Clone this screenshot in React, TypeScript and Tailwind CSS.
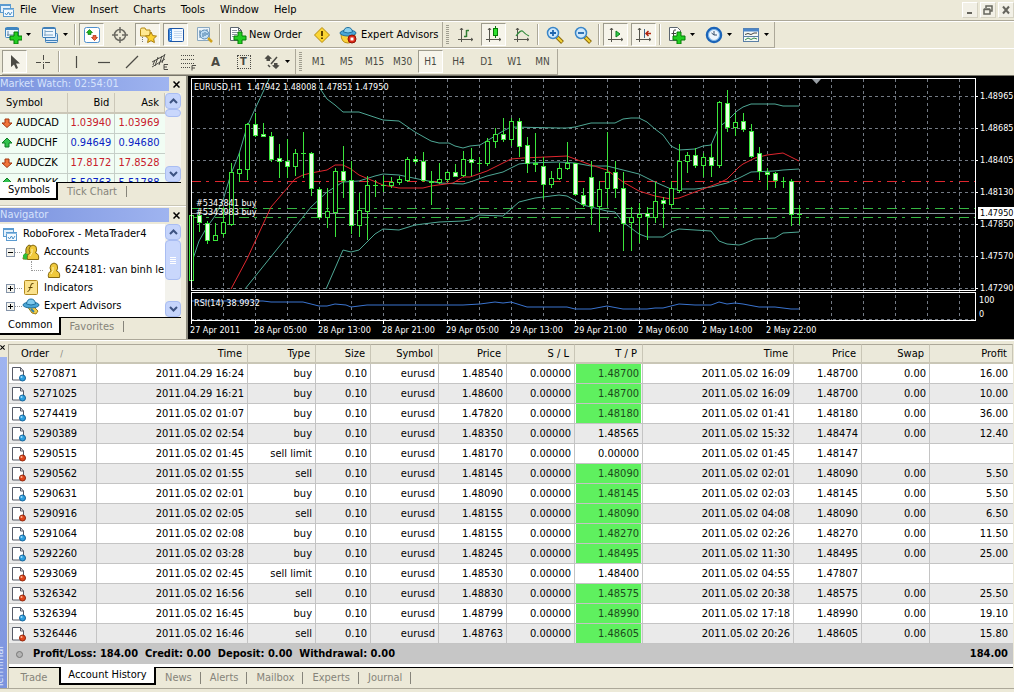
import { ReactNode } from 'react';
import { clsx } from 'clsx';

type Order = {
  id: string;
  open: string;
  type: 'buy' | 'sell' | 'sell limit';
  price: string;
  tp: string;
  hit: boolean;
  close: string;
  closePrice: string;
  swap: string;
  profit: string;
};

const orders: Order[] = [
  { id: '5270871', open: '2011.04.29 16:24', type: 'buy', price: '1.48540', tp: '1.48700', hit: true, close: '2011.05.02 16:09', closePrice: '1.48700', swap: '0.00', profit: '16.00' },
  { id: '5271025', open: '2011.04.29 16:21', type: 'buy', price: '1.48600', tp: '1.48700', hit: true, close: '2011.05.02 16:09', closePrice: '1.48700', swap: '0.00', profit: '10.00' },
  { id: '5274419', open: '2011.05.02 01:07', type: 'buy', price: '1.47820', tp: '1.48180', hit: true, close: '2011.05.02 01:41', closePrice: '1.48180', swap: '0.00', profit: '36.00' },
  { id: '5290389', open: '2011.05.02 02:54', type: 'buy', price: '1.48350', tp: '1.48565', hit: false, close: '2011.05.02 15:32', closePrice: '1.48474', swap: '0.00', profit: '12.40' },
  { id: '5290515', open: '2011.05.02 01:45', type: 'sell limit', price: '1.48170', tp: '0.00000', hit: false, close: '2011.05.02 01:45', closePrice: '1.48147', swap: '', profit: '' },
  { id: '5290562', open: '2011.05.02 01:55', type: 'sell', price: '1.48145', tp: '1.48090', hit: true, close: '2011.05.02 02:01', closePrice: '1.48090', swap: '0.00', profit: '5.50' },
  { id: '5290631', open: '2011.05.02 02:01', type: 'buy', price: '1.48090', tp: '1.48145', hit: true, close: '2011.05.02 02:03', closePrice: '1.48145', swap: '0.00', profit: '5.50' },
  { id: '5290916', open: '2011.05.02 02:05', type: 'sell', price: '1.48155', tp: '1.48090', hit: true, close: '2011.05.02 04:08', closePrice: '1.48090', swap: '0.00', profit: '6.50' },
  { id: '5291064', open: '2011.05.02 02:08', type: 'buy', price: '1.48155', tp: '1.48270', hit: true, close: '2011.05.02 02:26', closePrice: '1.48270', swap: '0.00', profit: '11.50' },
  { id: '5292260', open: '2011.05.02 03:28', type: 'buy', price: '1.48245', tp: '1.48495', hit: true, close: '2011.05.02 11:30', closePrice: '1.48495', swap: '0.00', profit: '25.00' },
  { id: '5293069', open: '2011.05.02 02:45', type: 'sell limit', price: '1.48530', tp: '1.48400', hit: false, close: '2011.05.02 04:55', closePrice: '1.47807', swap: '', profit: '' },
  { id: '5326342', open: '2011.05.02 16:56', type: 'sell', price: '1.48830', tp: '1.48575', hit: true, close: '2011.05.02 20:38', closePrice: '1.48575', swap: '0.00', profit: '25.50' },
  { id: '5326394', open: '2011.05.02 16:45', type: 'buy', price: '1.48799', tp: '1.48990', hit: true, close: '2011.05.02 17:18', closePrice: '1.48990', swap: '0.00', profit: '19.10' },
  { id: '5326446', open: '2011.05.02 16:46', type: 'sell', price: '1.48763', tp: '1.48605', hit: true, close: '2011.05.02 20:26', closePrice: '1.48605', swap: '0.00', profit: '15.80' },
];

const quotes = [
  { symbol: 'AUDCAD', bid: '1.03940', ask: '1.03969', up: false },
  { symbol: 'AUDCHF', bid: '0.94649', ask: '0.94680', up: true },
  { symbol: 'AUDCZK', bid: '17.8172', ask: '17.8528', up: false },
  { symbol: 'AUDDKK', bid: '5.50763', ask: '5.51788', up: true },
];

// high, body top, body bottom, low, bearish (filled)
const candles: [number, number, number, number, 0 | 1][] = [
  [137, 139, 204, 209, 0], [136, 139, 146, 155, 1], [145, 147, 164, 167, 1], [147, 159, 164, 164, 0],
  [131, 146, 157, 160, 0], [87, 96, 148, 149, 0], [77, 93, 97, 105, 0], [47, 48, 93, 103, 0],
  [37, 48, 59, 60, 1], [47, 58, 60, 60, 1], [56, 60, 83, 85, 1], [68, 82, 85, 101, 1],
  [63, 85, 90, 101, 1], [73, 77, 90, 99, 0], [56, 77, 77, 101, 0], [76, 77, 112, 119, 1],
  [111, 113, 141, 142, 1], [112, 135, 141, 151, 0], [92, 95, 136, 160, 0], [70, 95, 104, 121, 1],
  [85, 104, 149, 157, 1], [117, 134, 149, 160, 0], [100, 109, 135, 163, 0], [104, 109, 109, 120, 0],
  [100, 109, 109, 115, 0], [101, 106, 109, 111, 0], [100, 103, 106, 108, 0], [81, 83, 104, 105, 0],
  [80, 83, 85, 87, 1], [76, 85, 104, 105, 1], [95, 105, 106, 128, 1], [87, 103, 106, 107, 0],
  [95, 96, 103, 105, 0], [88, 96, 100, 100, 1], [75, 83, 99, 100, 0], [72, 83, 86, 99, 1],
  [81, 87, 87, 95, 1], [62, 65, 87, 89, 0], [52, 58, 65, 71, 0], [42, 58, 63, 65, 1],
  [42, 45, 63, 69, 0], [42, 45, 70, 80, 1], [61, 69, 87, 96, 1], [57, 87, 88, 95, 1],
  [81, 90, 108, 122, 1], [95, 102, 108, 111, 0], [87, 92, 102, 103, 0], [66, 87, 92, 93, 0],
  [87, 87, 118, 119, 1], [112, 119, 128, 130, 1], [85, 101, 130, 148, 1], [105, 113, 130, 155, 0],
  [56, 96, 112, 129, 0], [85, 96, 112, 121, 1], [96, 112, 147, 174, 1], [131, 141, 146, 174, 0],
  [127, 138, 141, 166, 0], [131, 137, 140, 163, 1], [106, 125, 141, 146, 0], [121, 124, 127, 151, 1],
  [105, 112, 128, 130, 0], [68, 85, 114, 116, 0], [76, 79, 85, 96, 0], [72, 79, 89, 91, 1],
  [77, 81, 89, 100, 0], [68, 81, 89, 100, 1], [25, 26, 89, 91, 0], [14, 27, 51, 55, 1],
  [37, 46, 51, 59, 0], [37, 45, 53, 55, 1], [48, 55, 80, 81, 1], [71, 77, 95, 103, 1],
  [92, 96, 98, 113, 1], [96, 97, 104, 111, 1], [101, 105, 105, 111, 1], [103, 105, 138, 149, 1],
  [129, 138, 138, 148, 1],
];

const bands = [
  '5,183 11,165 19,151 27,140 35,124 43,98 51,78 59,51 67,33 75,16 81,3',
  '131,11 135,17 139,23 147,29 155,36 171,36 180,39 195,44 211,45 227,56 243,65 251,67 261,67 267,70 275,72 282,70 292,69 307,60 315,55 323,51 372,52 379,52 387,51 403,47 427,47 435,43 443,42 451,42 459,46 467,53 475,59 483,70 491,74 507,73 515,70 523,69 531,51 539,45 549,35 555,31 563,28 587,28 595,30 611,30',
  '57,213 123,131 139,116 155,106 171,105 187,100 195,98 211,99 235,104 251,107 275,108 282,106 299,100 315,96 331,88 339,87 371,86 387,87 403,90 419,90 435,94 451,98 467,106 483,113 507,113 523,111 539,107 551,102 563,96 586,95 595,94 611,93',
  '138,213 155,174 163,176 171,174 187,158 195,153 211,154 227,149 251,146 275,145 282,144 291,139 315,140 331,126 347,122 371,119 379,120 395,129 419,135 427,136 435,146 451,158 459,161 475,161 483,156 491,153 523,155 531,165 539,168 551,169 555,168 567,163 587,162 595,157 611,156',
];

const average =
  '43,213 59,183 83,131 107,103 115,99 123,97 139,94 147,89 155,89 163,93 171,99 195,109 211,112 235,112 243,110 265,107 275,101 282,101 299,95 323,83 335,82 379,80 403,89 419,94 435,106 451,115 467,120 483,123 491,122 515,113 531,107 539,103 551,91 555,88 567,82 579,79 595,77 611,85';

const rsi =
  '3,225 75,225 83,226 115,226 123,228 131,230 139,230 147,228 158,229 163,231 179,229 217,229 275,229 292,228 307,226 315,227 323,226 339,231 355,231 379,231 387,233 403,233 419,230 435,233 459,233 467,232 475,232 491,228 507,229 523,229 531,226 539,228 547,227 555,228 571,231 587,231 603,233 611,233';

const times = [
  '27 Apr 2011', '28 Apr 05:00', '28 Apr 13:00', '28 Apr 21:00', '29 Apr 05:00',
  '29 Apr 13:00', '29 Apr 21:00', '2 May 06:00', '2 May 14:00', '2 May 22:00',
];

const prices = ['1.48965', '1.48685', '1.48405', '1.48130', '1.47850', '1.47570', '1.47290'];

const menus = ['File', 'View', 'Insert', 'Charts', 'Tools', 'Window', 'Help'];
const frames = ['M1', 'M5', 'M15', 'M30', 'H1', 'H4', 'D1', 'W1', 'MN'];

/* ---------- icons ---------- */

function Svg({ children, size = 18 }: { children: ReactNode; size?: number }) {
  return (
    <svg width={size} height={size} viewBox={`0 0 ${size} ${size}`} fill="none" className="shrink-0" aria-hidden="true">
      {children}
    </svg>
  );
}

const plus = 'M9 7h4v4h4v4h-4v4h-4v-4h-4v-4h4z';

function ChartWindowsIcon() {
  return (
    <Svg size={14}>
      <rect x="0.5" y="1.5" width="10" height="8" fill="#e4f1fb" stroke="#5b9bd0" />
      <path d="M0 2.5h11" stroke="#5b9bd0" />
      <rect x="3.5" y="5.5" width="10" height="8" fill="#f4faff" stroke="#5b9bd0" />
      <path d="M3 6.5h11" stroke="#8dbce2" />
      <path d="M5 10l1.500 2 2-3 1.500 3 2-3" stroke="#4a90c8" />
    </Svg>
  );
}

function NewChartIcon() {
  return (
    <Svg size={18}>
      <rect x="1.500" y="1.500" width="13" height="10" rx="1" fill="#eef6fd" stroke="#3f86c0" />
      <path d="M1 3h14" stroke="#3f86c0" strokeWidth="2" />
      <path d="M4 10V5M3 9h7" stroke="#5f87a6" />
      <path d={plus} transform="translate(1 -1)" fill="#22cf22" stroke="#067a06" />
    </Svg>
  );
}

function ProfilesIcon() {
  return (
    <Svg>
      <rect x="4.500" y="7.500" width="12" height="9" rx="1" fill="#d6e8f8" stroke="#3f7fb8" />
      <rect x="1.500" y="1.500" width="13" height="10" rx="1" fill="#eef6fd" stroke="#3f7fb8" />
      <path d="M2 2.500h12M2 11.500h12M5 14.500h11" stroke="#3f7fb8" />
      <path d="M4 4v6M3 9h9M4 5.500h8" stroke="#7ea6c6" />
    </Svg>
  );
}

function MarketIcon() {
  return (
    <Svg>
      <rect x="1.500" y="1.500" width="15" height="15" rx="2" fill="#fff" stroke="#4d8fce" />
      <path d="M6.500 3.500l3 3h-1.500v2H5v-2H3.500z" fill="#1fb51f" stroke="#0b7d0b" strokeWidth="0.700" />
      <path d="M11.500 14.500l-3-3H10v-2h3v2h1.500z" fill="#f0653a" stroke="#a82a0c" strokeWidth="0.700" />
    </Svg>
  );
}

function CrosshairIcon() {
  return (
    <Svg>
      <circle cx="9" cy="9" r="5.500" stroke="#6b6a62" strokeWidth="1.500" />
      <path d="M9 1v6M9 11v6M1 9h6M11 9h6" stroke="#6b6a62" strokeWidth="1.500" />
    </Svg>
  );
}

function NavigatorIcon() {
  return (
    <Svg>
      <path d="M1.500 3.500q0-1.500 1.500-1.500h3l1 2h4v6h-9.500z" fill="#ffe992" stroke="#b48a12" />
      <path d="M3.500 11v6" stroke="#777" strokeDasharray="1 1" />
      <path d="M12 6l1.700 3.600 3.800.5-2.800 2.600.7 3.900-3.400-1.900-3.400 1.900.7-3.900-2.800-2.600 3.800-.5z" fill="#fcd231" stroke="#a97c0c" />
    </Svg>
  );
}

function TerminalIcon() {
  return (
    <Svg>
      <rect x="1.500" y="2.500" width="15" height="13" rx="1" fill="#f4f9ff" stroke="#1d56a5" />
      <rect x="2" y="3" width="3" height="12" fill="#3f8ade" />
      <path d="M3.500 5v9" stroke="#d7e9fb" strokeDasharray="1 1" />
      <path d="M7 5.500h8M7 7.500h8M7 9.500h8M7 11.500h8" stroke="#c7d9ee" />
    </Svg>
  );
}

function TesterIcon() {
  return (
    <Svg>
      <path d="M2.500 1.500h12v13h-12z" fill="#edf5fb" stroke="#8aa8c0" />
      <path d="M5 4v8M4 6h2M12 3v6M8 4v3" stroke="#5d87a8" />
      <circle cx="9.500" cy="8.500" r="4.500" fill="#b9dbf5" fillOpacity="0.800" stroke="#5a8bb4" />
      <path d="M8 11V7M10 10V6M12 9V7" stroke="#3f76a3" />
      <path d="M13 12l4 4" stroke="#d0a21c" strokeWidth="2.500" />
    </Svg>
  );
}

function NewOrderIcon() {
  return (
    <Svg>
      <path d="M1.500 1.500h8l3 3v10h-11z" fill="#fff" stroke="#5c6670" />
      <path d="M9.500 1.500v3h3" stroke="#5c6670" />
      <path d="M3 4.500h5M3 6.500h7M3 8.500h5M3 10.500h4" stroke="#8a94a0" />
      <path d={plus} transform="translate(0 -1)" fill="#22cf22" stroke="#067a06" />
    </Svg>
  );
}

function AlertIcon() {
  return (
    <Svg>
      <path d="M9 1.500L16.500 9 9 16.500 1.500 9z" fill="#fbd534" stroke="#b78b0a" strokeLinejoin="round" />
      <path d="M9 5v5M9 11.500v1.500" stroke="#5e4300" strokeWidth="2" />
    </Svg>
  );
}

function ExpertIcon() {
  return (
    <Svg>
      <path d="M2 8h14q0 9-7 9T2 8z" fill="#f9d23c" stroke="#b88d12" />
      <ellipse cx="9" cy="7" rx="8" ry="3" fill="#4aa6d6" stroke="#1f6f9e" />
      <path d="M4.500 6Q5 1.500 9 1.500T13.500 6Q9 8 4.500 6z" fill="#8ad0ee" stroke="#1f6f9e" />
      <circle cx="13" cy="13" r="4" fill="#dd2a18" stroke="#8f1206" />
      <rect x="11.500" y="11.500" width="3" height="3" fill="#fff" />
    </Svg>
  );
}

const axes = 'M4.500 2v14M1 13.500h15M3 4l1.500-2L6 4M14 12l2 1.500-2 1.500';

function BarsIcon() {
  return (
    <Svg>
      <path d={axes} stroke="#55544c" />
      <path d="M9.500 4v7M7 10.500h2.500M9.500 4.500H12" stroke="#2f7d32" strokeWidth="1.500" />
    </Svg>
  );
}

function CandlesIcon() {
  return (
    <Svg>
      <path d={axes} stroke="#55544c" />
      <path d="M10.500 0v12" stroke="#067a06" />
      <rect x="8.500" y="2.500" width="4" height="7" fill="#2fe02f" stroke="#067a06" />
    </Svg>
  );
}

function LineIcon() {
  return (
    <Svg>
      <path d={axes} stroke="#55544c" />
      <path d="M3 10Q8 3 10 5.500T16 10" stroke="#2f8a3a" strokeWidth="1.200" />
    </Svg>
  );
}

function ZoomIcon({ zoomIn }: { zoomIn?: boolean }) {
  return (
    <Svg>
      <path d="M11 11l5.500 5.500" stroke="#8d6c0c" strokeWidth="4" />
      <path d="M11.500 11.500l4.500 4.500" stroke="#f3d438" strokeWidth="2" />
      <circle cx="7" cy="7" r="5.500" fill="#cfe8fb" stroke="#3a86c8" strokeWidth="1.500" />
      <path d={zoomIn ? 'M4 7h6M7 4v6' : 'M4 7h6'} stroke="#1f66ae" strokeWidth="1.800" />
    </Svg>
  );
}

function AutoScrollIcon() {
  return (
    <Svg>
      <path d={axes} stroke="#55544c" />
      <path d="M9 5l4 3-4 3z" fill="#2fd04a" stroke="#0b7d1c" />
    </Svg>
  );
}

function ShiftIcon() {
  return (
    <Svg>
      <path d={axes} stroke="#55544c" />
      <path d="M9.500 3v9" stroke="#3f678c" />
      <path d="M16 7.500h-5M13.500 5L11 7.500l2.500 2.500" stroke="#b0240f" strokeWidth="1.500" />
    </Svg>
  );
}

function IndicatorsIcon() {
  return (
    <Svg>
      <path d="M1.500 1.500h8l3 3v10h-11z" fill="#fff" stroke="#5c6670" />
      <path d="M8 4Q5.500 3 5.500 6v6M3.500 7.500H8" stroke="#444" />
      <path d={plus} transform="translate(0 -1)" fill="#22cf22" stroke="#067a06" />
    </Svg>
  );
}

function ClockIcon() {
  return (
    <Svg>
      <circle cx="9" cy="9" r="7" fill="#eef6fd" stroke="#1b64b8" strokeWidth="2.500" />
      <circle cx="9" cy="9" r="5.500" stroke="#79b4ea" />
      <path d="M9 5v4h3M6.500 7L9 9" stroke="#38506a" />
    </Svg>
  );
}

function TemplateIcon() {
  return (
    <Svg>
      <rect x="1.500" y="2.500" width="15" height="13" fill="#f5f9f5" stroke="#5a7fa6" />
      <path d="M1 4h16" stroke="#4c86c8" strokeWidth="3" />
      <path d="M2 10.500h14" stroke="#5a7fa6" />
      <path d="M3 8.500l3-1 3 1 3-1.500h3" stroke="#444" />
      <path d="M3 14l3-2 3 1.500 3-1.500 3 1" stroke="#2f8a4a" />
    </Svg>
  );
}

function CursorIcon() {
  return (
    <Svg>
      <path d="M5 2v12l3-2.500 2 4.500 2-1-2-4.500h4z" fill="#4c4b45" />
    </Svg>
  );
}

function LinesCrossIcon() {
  return (
    <Svg>
      <path d="M9.500 2v5M9.500 11v5M2 9.500h5M11 9.500h5M9 9.500h1" stroke="#4c4b45" />
    </Svg>
  );
}

function StrokeIcon({ d }: { d: string }) {
  return (
    <Svg>
      <path d={d} stroke="#4c4b45" strokeWidth="1.200" />
    </Svg>
  );
}

function ChannelIcon() {
  return (
    <Svg>
      <path d="M1 9L14 2M1 14l13-8M4 13L7 4M8 12l3-9M11 10l3-9M2 12l2-5" stroke="#4c4b45" />
      <path d="M17 11.500h-4v5h4M13 14h3" stroke="#4c4b45" />
    </Svg>
  );
}

function FiboIcon() {
  return (
    <Svg>
      <path d="M2 2.500h14M2 6.500h14M2 10.500h14M2 14.500h9" stroke="#4c4b45" strokeDasharray="1 1" />
      <path d="M17 12.500h-4v5M13 15h3" stroke="#4c4b45" />
    </Svg>
  );
}

function ShapesIcon() {
  return (
    <Svg>
      <path d="M5 2l4 3.500-2 .5v2H3.500V6l-2-.5zM13 16l-4-3.500 2-.5v-2h3.500v2l2 .5z" fill="#4c4b45" />
      <path d="M5 12l2 2M8 11l6-7" stroke="#4c4b45" strokeWidth="1.500" />
    </Svg>
  );
}

function DocIcon({ buy }: { buy: boolean }) {
  return (
    <Svg size={16}>
      <path d="M1.500 1.500h8l3 3.500v9h-11z" fill="#fff" stroke="#565a66" />
      <path d="M9.500 1.500v3.500h3" stroke="#565a66" />
      <circle cx="11.500" cy="12" r="3" fill={buy ? '#2b9fdf' : '#e0451c'} stroke={buy ? '#14649a' : '#94260a'} />
      <circle cx="10.500" cy="11" r="1" fill={buy ? '#a3dcfa' : '#fbb595'} />
    </Svg>
  );
}

function ArrowIcon({ up }: { up: boolean }) {
  return (
    <Svg size={12}>
      {up ? (
        <path d="M6 1l5 5H8v4H4V6H1z" fill="#2fc24b" stroke="#0d7a22" />
      ) : (
        <path d="M6 10.500l5-4.500H8V2H4v4H1z" fill="#f0763c" stroke="#a3350e" />
      )}
    </Svg>
  );
}

function PersonIcon({ pair }: { pair?: boolean }) {
  return (
    <Svg>
      {pair && <path d="M1 16q0-5 3-6 -1-6 3-8 4 1 3 6v8z" fill="#d8b82c" stroke="#7d6410" />}
      {pair && <circle cx="4" cy="13.500" r="3" fill="#2fbf3a" />}
      <path d="M5.500 16.500q-1-5 2.500-6.500-2-3 0-6.500 3-3 6 0 1.500 4-.500 6.500 4 1 3 6.500z" fill="#f0c93c" stroke="#86690f" />
      <path d="M10 6q1 4-2 7" stroke="#fff3b0" />
    </Svg>
  );
}

function FunctionIcon() {
  return (
    <Svg>
      <rect x="2.500" y="1.500" width="13" height="14" rx="1" fill="#fbe28c" stroke="#b38a20" />
      <path d="M11.500 4.500Q9 3.500 8.500 7.500T5.500 13M6.500 8.500h4" stroke="#5e4300" />
    </Svg>
  );
}

function HatIcon() {
  return (
    <Svg>
      <path d="M5 9l5-1 6 6-2 3-4-1z" fill="#f3cf48" stroke="#9c7a14" />
      <ellipse cx="9" cy="8" rx="8" ry="3" fill="#4aa6d6" stroke="#1f6f9e" />
      <path d="M4.500 7Q5 2 9 2t4.500 5Q9 9 4.500 7z" fill="#7fcbee" stroke="#1f6f9e" />
      <path d="M9 12l3 3" stroke="#2f80ad" strokeWidth="2" />
    </Svg>
  );
}

/* ---------- small parts ---------- */

function Caret() {
  return (
    <svg width="5" height="3" viewBox="0 0 5 3" aria-hidden="true">
      <path d="M0 0h5L2.500 3z" fill="#000" />
    </svg>
  );
}

function Tool({ label, pressed, drop, children }: { label: string; pressed?: boolean; drop?: boolean; children: ReactNode }) {
  return (
    <button
      type="button"
      aria-label={label}
      aria-pressed={pressed}
      className={clsx(
        'flex h-[23px] shrink-0 items-center justify-center border text-[10px] text-[#4a4942]',
        drop ? 'w-[34px] gap-1' : 'w-[25px]',
        pressed ? 'border-t-[#9d9b8d] border-l-[#9d9b8d] border-r-white border-b-white bg-[#f6f4ea]' : 'border-transparent'
      )}
    >
      {children}
      {drop && <Caret />}
    </button>
  );
}

function Separator() {
  return <div className="h-[21px] w-[2px] shrink-0 border-l border-[#aca899] bg-white" />;
}

function Gripper() {
  return (
    <div className="flex h-5 flex-col justify-between">
      {Array.from({ length: 10 }, (_, i) => (
        <div key={i} className="h-px w-[3px] bg-[#a09e90]" />
      ))}
    </div>
  );
}

function Bar({ children }: { children: ReactNode }) {
  return (
    <div className="flex h-[26px] items-center gap-[3px] border-r border-b border-[#aca899] pr-[2px]">
      {children}
    </div>
  );
}

function CloseMark() {
  return (
    <svg width="7" height="7" viewBox="0 0 7 7" aria-hidden="true">
      <path d="M0.500 0.500l6 6M6.500 0.500l-6 6" stroke="#000" strokeWidth="1.500" />
    </svg>
  );
}

function PanelTitle({ children }: { children: ReactNode }) {
  return (
    <div className="flex h-[14px] items-center justify-between pr-[6px]">
      <h2 className="h-full w-[169px] overflow-hidden bg-gradient-to-r from-[#7b93de] to-[#9fb4f0] text-[11px] leading-[14px] text-[#d6e2fb]">
        {children}
      </h2>
      <button type="button" aria-label="Close">
        <CloseMark />
      </button>
    </div>
  );
}

function ScrollBar({ tall }: { tall?: boolean }) {
  return (
    <div className="flex w-4 shrink-0 flex-col bg-[#f3f2ec]">
      <button type="button" aria-label="Scroll up" className="flex h-4 items-center justify-center rounded-sm border border-[#a9bdf2] bg-[#c5d4fb]">
        <svg width="9" height="6" viewBox="0 0 9 6" fill="none"><path d="M1 5l3.500-3.500L8 5" stroke="#3d5382" strokeWidth="2" /></svg>
      </button>
      <div
        className={clsx(
          'flex flex-col items-center justify-center gap-px rounded-sm border border-[#a9bdf2] bg-[#c9d7fc]',
          tall ? 'h-10' : 'h-2'
        )}
      >
        {tall && [0, 1, 2, 3].map((i) => <div key={i} className="h-px w-[6px] bg-white" />)}
      </div>
      <div className="flex-1" />
      <button type="button" aria-label="Scroll down" className="flex h-4 items-center justify-center rounded-sm border border-[#a9bdf2] bg-[#c5d4fb]">
        <svg width="9" height="6" viewBox="0 0 9 6" fill="none"><path d="M1 1l3.500 3.500L8 1" stroke="#3d5382" strokeWidth="2" /></svg>
      </button>
    </div>
  );
}

function PanelTabs({ active, other }: { active: string; other: string }) {
  return (
    <div className="flex h-[18px] border-t border-black">
      <button type="button" className="-mt-px h-[18px] border-r-2 border-b-2 border-black bg-white pr-[6px] pl-2 leading-4">
        {active}
      </button>
      <button type="button" className="px-[9px] text-[#86847a]">
        {other}
      </button>
      <span className="my-[3px] w-px bg-[#86847a]" />
    </div>
  );
}

/* ---------- panels ---------- */

function MenuBar() {
  return (
    <div className="flex h-[21px] items-center justify-between border-b border-[#aca899]">
      <nav className="flex items-center">
        <ChartWindowsIcon />
        {menus.map((m) => (
          <button key={m} type="button" className="pr-[9px] pl-[6px]">
            {m}
          </button>
        ))}
      </nav>
      <div className="flex gap-[2px]">
        {['Minimize', 'Restore', 'Close'].map((name) => (
          <button key={name} type="button" aria-label={name} className="flex h-4 w-4 items-center justify-center border border-r-[#d5d2c2] border-b-[#d5d2c2] border-t-white border-l-white bg-[#f2f0e6]">
            <svg width="10" height="10" viewBox="0 0 10 10" fill="none">
              {name === 'Minimize' && <path d="M2 8h5" stroke="#66655d" strokeWidth="2" />}
              {name === 'Restore' && <path d="M3 3V1h6v5H7M1 4.500h6V9H1zM1 4h6" stroke="#66655d" strokeWidth="1.500" />}
              {name === 'Close' && <path d="M2 1.500l6 7M8 1.500l-6 7" stroke="#66655d" strokeWidth="2" />}
            </svg>
          </button>
        ))}
      </div>
    </div>
  );
}

function Toolbars() {
  return (
    <div className="border-b border-[#77756a]">
      <div className="flex border-t border-white">
        <Bar>
          <Tool label="New chart" drop><NewChartIcon /></Tool>
          <Tool label="Profiles" drop><ProfilesIcon /></Tool>
          <Separator />
          <Tool label="Market Watch" pressed><MarketIcon /></Tool>
          <Tool label="Data Window"><CrosshairIcon /></Tool>
          <Tool label="Navigator" pressed><NavigatorIcon /></Tool>
          <Tool label="Terminal" pressed><TerminalIcon /></Tool>
          <Tool label="Strategy Tester"><TesterIcon /></Tool>
          <Separator />
          <button type="button" className="flex w-[82px] items-center gap-[2px] pl-[5px] whitespace-nowrap">
            <NewOrderIcon />
            New Order
          </button>
          <Tool label="MetaEditor"><AlertIcon /></Tool>
          <button type="button" className="flex w-[103px] items-center gap-[4px] pl-[2px] whitespace-nowrap">
            <ExpertIcon />
            Expert Advisors
          </button>
        </Bar>
        <Bar>
          <div className="pr-px pl-[3px]">
            <Gripper />
          </div>
          <Tool label="Bar Chart"><BarsIcon /></Tool>
          <Tool label="Candlesticks" pressed><CandlesIcon /></Tool>
          <Tool label="Line Chart"><LineIcon /></Tool>
          <Separator />
          <Tool label="Zoom In"><ZoomIcon zoomIn /></Tool>
          <Tool label="Zoom Out"><ZoomIcon /></Tool>
          <Separator />
          <Tool label="Auto Scroll" pressed><AutoScrollIcon /></Tool>
          <Tool label="Chart Shift" pressed><ShiftIcon /></Tool>
          <Separator />
          <Tool label="Indicators" drop><IndicatorsIcon /></Tool>
          <Tool label="Periods" drop><ClockIcon /></Tool>
          <Tool label="Templates" drop><TemplateIcon /></Tool>
        </Bar>
      </div>
      <div className="flex border-t border-white pl-[2px]">
        <Bar>
          <Tool label="Cursor" pressed><CursorIcon /></Tool>
          <Tool label="Crosshair"><LinesCrossIcon /></Tool>
          <Separator />
          <Tool label="Vertical Line"><StrokeIcon d="M9.500 3v12" /></Tool>
          <Tool label="Horizontal Line"><StrokeIcon d="M3 9.500h12" /></Tool>
          <Tool label="Trendline"><StrokeIcon d="M3 15L15 3" /></Tool>
          <Tool label="Channel"><ChannelIcon /></Tool>
          <Tool label="Fibonacci"><FiboIcon /></Tool>
          <Tool label="Text"><span className="text-[13px] font-bold">A</span></Tool>
          <Tool label="Text Label">
            <span className="h-[14px] w-[14px] border border-dotted border-[#4c4b45] text-[11px] leading-3 font-bold">T</span>
          </Tool>
          <Tool label="Arrows" drop><ShapesIcon /></Tool>
        </Bar>
        <Bar>
          <div className="pr-px pl-[3px]">
            <Gripper />
          </div>
          {frames.map((f) => (
            <Tool key={f} label={f} pressed={f === 'H1'}>{f}</Tool>
          ))}
        </Bar>
      </div>
    </div>
  );
}

function MarketWatch() {
  return (
    <section className="border-b border-[#c9c6b6] pb-[5px]">
      <PanelTitle>Market Watch: 02:54:01</PanelTitle>
      <div className="mt-[2px] mr-[5px] flex h-[89px] overflow-hidden bg-white">
        <table className="h-fit flex-1 table-fixed border-collapse bg-[#f1fdf4]">
          <colgroup>
            <col className="w-[68px]" />
            <col className="w-[48px]" />
            <col className="w-[50px]" />
          </colgroup>
          <thead>
            <tr className="h-5 border-b-2 border-[#cbc7b8] bg-[#ebe9da]">
              <th className="border-r border-[#cbc7b8] pl-[6px] text-left font-normal">Symbol</th>
              <th className="border-r border-[#cbc7b8] pr-[5px] text-right font-normal">Bid</th>
              <th className="border-r border-[#cbc7b8] pr-[5px] text-right font-normal">Ask</th>
            </tr>
          </thead>
          <tbody>
            {quotes.map((q) => (
              <tr key={q.symbol} className="h-5 border-b border-[#c6cfc8]">
                <td className="border-r border-[#c6cfc8] p-0">
                  <span className="flex items-center gap-[3px] pl-px">
                    <ArrowIcon up={q.up} />
                    {q.symbol}
                  </span>
                </td>
                <td className={clsx('border-r border-[#c6cfc8] p-0 pr-[3px] text-right', q.up ? 'text-[#0a1fc4]' : 'text-[#c8202c]')}>{q.bid}</td>
                <td className={clsx('p-0 pr-[5px] text-right', q.up ? 'text-[#0a1fc4]' : 'text-[#c8202c]')}>{q.ask}</td>
              </tr>
            ))}
          </tbody>
        </table>
        <ScrollBar />
      </div>
      <div className="mr-[5px]">
        <PanelTabs active="Symbols" other="Tick Chart" />
      </div>
    </section>
  );
}

function TreeBox({ open }: { open?: boolean }) {
  return (
    <svg width="9" height="9" viewBox="0 0 9 9" fill="none" className="shrink-0">
      <rect x="0.500" y="0.500" width="8" height="8" fill="#f5f4ee" stroke="#8493a8" />
      <path d={open ? 'M2 4.500h5' : 'M2 4.500h5M4.500 2v5'} stroke="#000" />
    </svg>
  );
}

function Navigator() {
  return (
    <section className="border-t border-white pt-px">
      <PanelTitle>Navigator</PanelTitle>
      <div className="mt-[2px] mr-[5px] flex h-[93px] overflow-hidden bg-white">
        <ul className="flex-1 overflow-hidden pt-px whitespace-nowrap">
          <li className="flex h-[18px] items-center gap-[6px] pl-[3px]">
            <ChartWindowsIcon />
            RoboForex - MetaTrader4
          </li>
          <li className="flex h-[18px] items-center pl-[6px]">
            <TreeBox open />
            <span className="w-[7px] border-t border-dotted border-[#999]" />
            <PersonIcon pair />
            <span className="pl-1">Accounts</span>
          </li>
          <li className="flex h-[18px] items-center pl-[31px]">
            <span className="-mt-[8px] h-[10px] w-[12px] border-b border-l border-dotted border-[#999]" />
            <PersonIcon />
            <span className="pl-1">624181: van binh le</span>
          </li>
          <li className="flex h-[18px] items-center pl-[6px]">
            <TreeBox />
            <span className="w-[7px] border-t border-dotted border-[#999]" />
            <FunctionIcon />
            <span className="pl-1">Indicators</span>
          </li>
          <li className="flex h-[18px] items-center pl-[6px]">
            <TreeBox />
            <span className="w-[7px] border-t border-dotted border-[#999]" />
            <HatIcon />
            <span className="pl-1">Expert Advisors</span>
          </li>
        </ul>
        <ScrollBar tall />
      </div>
      <div className="mr-[5px]">
        <PanelTabs active="Common" other="Favorites" />
      </div>
    </section>
  );
}

function Level({ y, color }: { y: number; color: string }) {
  return (
    <svg x="3" y={y} width="100%" height="1">
      {Array.from({ length: 100 }, (_, i) => (
        <path key={i} d={`M${24 * i} 0h10v1h-10zM${24 * i + 15} 0h3v1h-3z`} fill={color} />
      ))}
    </svg>
  );
}

function Chart() {
  return (
    <section className="flex h-[263px] min-w-0 flex-1 border-l-2 border-[#8f8d80] bg-black text-[9px]">
      <svg width="100%" height="262" className="min-w-0 flex-1" fill="none" role="img" aria-label="EURUSD hourly chart">
        <g shapeRendering="crispEdges">
          <g stroke="#737a84" strokeDasharray="3 3">
            {Array.from({ length: 40 }, (_, k) => (
              <path key={k} d={`M${35.5 + 32 * k} 3V244`} />
            ))}
            {prices.map((p, k) => (
              <line key={p} x1="3" x2="100%" y1={20.5 + 32 * k} y2={20.5 + 32 * k} />
            ))}
            <line x1="3" x2="100%" y1="243.500" y2="243.500" />
          </g>
          <Level y={105} color="#e0262e" />
          <Level y={132} color="#35b843" />
          <Level y={141} color="#35b843" />
          <line x1="3" x2="100%" y1="137.500" y2="137.500" stroke="#8b939c" />
        </g>
        {bands.map((b) => (
          <polyline key={b} points={b} stroke="#4fa896" />
        ))}
        <polyline points={average} stroke="#e0262e" />
        <polyline points={rsi} stroke="#3a74d0" />
        <g shapeRendering="crispEdges" stroke="#3be63b">
          {candles.map(([high, top, bottom, low, down], i) => {
            const x = 3.5 + 8 * i;
            return (
              <g key={i}>
                <path d={`M${x} ${high}V${low + 1}`} />
                {bottom === top ? (
                  <path d={`M${x - 2.5} ${top + 0.5}h5`} />
                ) : (
                  <rect x={x - 2} y={top + 0.5} width="4" height={bottom - top} fill={down ? '#e9ffe4' : '#000'} />
                )}
              </g>
            );
          })}
        </g>
        <g shapeRendering="crispEdges" stroke="#fff">
          <line x1="3" x2="100%" y1="2.500" y2="2.500" />
          <line x1="3" x2="100%" y1="214.500" y2="214.500" />
          <line x1="3" x2="100%" y1="216.500" y2="216.500" />
          <line x1="3" x2="100%" y1="244.500" y2="244.500" />
          <path d="M3.500 2v213M3.500 216v29" />
          {times.map((t, i) => (
            <path key={t} d={`M${3.5 + 64 * i} 245v3`} />
          ))}
        </g>
        <path d="M624 3h9l-4.500 5z" fill="#9aa0a6" />
        <g fill="#fff">
          <text x="6" y="14" xmlSpace="preserve">EURUSD,H1  1.47942 1.48008 1.47851 1.47950</text>
          <text x="8" y="130">#5343841 buy</text>
          <text x="8" y="139">#5343983 buy</text>
          <text x="6" y="230">RSI(14) 38.9932</text>
          {times.map((t, i) => (
            <text key={t} x={2 + 64 * i} y="257">{t}</text>
          ))}
        </g>
      </svg>
      <svg width="39" height="262" className="shrink-0" fill="none" aria-hidden="true">
        <path d="M0.500 2v213M0.500 216v29" stroke="#fff" />
        {prices.map((p, k) => (
          <g key={p}>
            <path d={`M0 ${20.5 + 32 * k}h3`} stroke="#fff" />
            <text x="5" y={23 + 32 * k} fill="#fff">{p}</text>
          </g>
        ))}
        <rect x="3" y="131" width="36" height="12" fill="#fff" />
        <text x="5" y="140" fill="#000">1.47950</text>
        <text x="4" y="227" fill="#fff">100</text>
        <text x="4" y="241" fill="#fff">0</text>
      </svg>
    </section>
  );
}

const columns = ['Time', 'Type', 'Size', 'Symbol', 'Price', 'S / L', 'T / P', 'Time', 'Price', 'Swap', 'Profit'];

const cell = 'border-r border-b border-[#c4c4c4] p-0 pr-[3px] text-right';

function History() {
  return (
    <table className="w-full table-fixed border-separate border-spacing-0 whitespace-nowrap">
      <colgroup>
        <col className="w-[88px]" />
        <col className="w-[151px]" />
        <col className="w-[68px]" />
        <col className="w-[55px]" />
        <col className="w-[68px]" />
        <col className="w-[68px]" />
        <col className="w-[68px]" />
        <col className="w-[68px]" />
        <col className="w-[151px]" />
        <col className="w-[68px]" />
        <col className="w-[68px]" />
        <col />
      </colgroup>
      <thead>
        <tr className="h-5 bg-[#ebe9da]">
          <th className="border-t border-r border-b-2 border-[#c9c6b6] border-t-[#aca899] p-0 pl-3 text-left font-normal">
            Order <span className="pl-2 text-[9px] text-[#86847a]">/</span>
          </th>
          {columns.map((c, i) => (
            <th key={i} className="border-t border-r border-b-2 border-[#c9c6b6] border-t-[#aca899] p-0 pr-[5px] text-right font-normal">
              {c}
            </th>
          ))}
        </tr>
      </thead>
      <tbody>
        {orders.map((o, i) => (
          <tr key={o.id} className={clsx('h-5', i % 2 ? 'bg-[#eaeaea]' : 'bg-white')}>
            <td className="border-r border-b border-[#c4c4c4] p-0">
              <span className="flex items-center gap-[6px] pl-[2px]">
                <DocIcon buy={o.type === 'buy'} />
                {o.id}
              </span>
            </td>
            <td className={cell}>{o.open}</td>
            <td className={cell}>{o.type}</td>
            <td className={cell}>0.10</td>
            <td className={cell}>eurusd</td>
            <td className={cell}>{o.price}</td>
            <td className={cell}>0.00000</td>
            <td className="border-r border-b border-[#c4c4c4] p-0 text-right">
              <span className={clsx('mx-px block h-[19px] pr-[2px] leading-[19px]', o.hit && 'bg-[#5ff05f] text-[#1c4a1c]')}>{o.tp}</span>
            </td>
            <td className={cell}>{o.close}</td>
            <td className={cell}>{o.closePrice}</td>
            <td className={cell}>{o.swap}</td>
            <td className="border-b border-[#c4c4c4] p-0 pr-[5px] text-right">{o.profit}</td>
          </tr>
        ))}
      </tbody>
      <tfoot>
        <tr className="h-5 bg-[#c6c6c6] font-bold">
          <td colSpan={11} className="p-0">
            <span className="flex items-center pl-[7px] whitespace-pre">
              <span className="mr-[10px] h-[7px] w-[7px] rounded-full border border-[#777] bg-[#b4b4b4]" />
              Profit/Loss: 184.00  Credit: 0.00  Deposit: 0.00  Withdrawal: 0.00
            </span>
          </td>
          <td className="p-0 pr-[5px] text-right">184.00</td>
        </tr>
      </tfoot>
    </table>
  );
}

function Terminal() {
  return (
    <section className="flex border-t border-white pt-[3px]">
      <div className="flex w-2 shrink-0 flex-col">
        <button type="button" aria-label="Close" className="flex h-[13px] w-[5px] items-start justify-end overflow-hidden">
          <CloseMark />
        </button>
        <div className="flex w-[7px] flex-1 flex-col items-end justify-end overflow-hidden bg-gradient-to-b from-[#9fb4f0] to-[#7b93de]">
          <span className="rotate-180 text-[11px] leading-[14px] text-[#d6e2fb] [writing-mode:vertical-rl]">Terminal</span>
        </div>
      </div>
      <div className="min-w-0 flex-1 border-l border-[#aca899] pr-px">
        <div className="bg-white pb-[3px]">
          <History />
        </div>
        <div className="flex h-[21px] items-start border-t border-black text-[#86847a]">
          <button type="button" className="w-[50px] pt-[3px]">Trade</button>
          <button type="button" className="-mt-px h-[18px] w-[97px] border-x-2 border-b-2 border-black bg-white leading-4 text-black">
            Account History
          </button>
          {['News', 'Alerts', 'Mailbox', 'Experts', 'Journal'].map((t) => (
            <button key={t} type="button" className="relative px-[9px] pt-[3px] after:absolute after:top-1 after:right-0 after:h-3 after:w-px after:bg-[#86847a]">
              {t}
            </button>
          ))}
        </div>
      </div>
    </section>
  );
}

export default function App() {
  return (
    <div className="min-h-screen overflow-hidden bg-[#ece9d8] text-[11px] leading-[14px] text-black [font-family:'DejaVu_Sans_Condensed',Tahoma,'DejaVu_Sans',sans-serif]">
      <MenuBar />
      <Toolbars />
      <main>
        <div className="flex border-b border-[#aca899]">
          <aside className="w-[186px] shrink-0 pt-px">
            <MarketWatch />
            <Navigator />
          </aside>
          <Chart />
        </div>
        <Terminal />
      </main>
      <div className="border-b border-[#aca899]" />
    </div>
  );
}
